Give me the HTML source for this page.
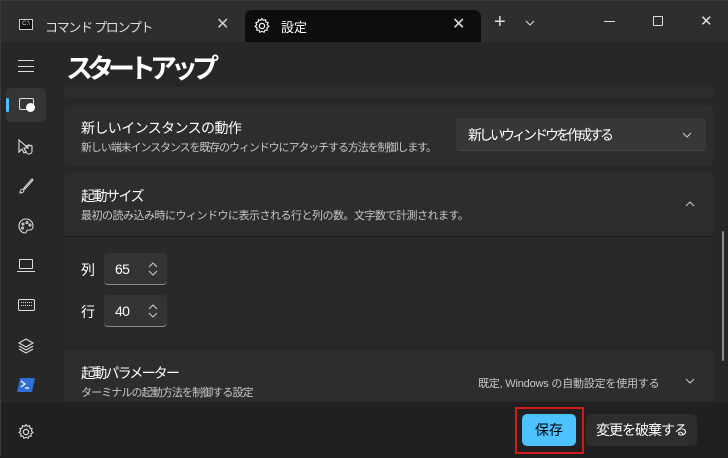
<!DOCTYPE html>
<html><head><meta charset="utf-8"><style>
*{margin:0;padding:0;box-sizing:border-box}
body{width:728px;height:457px;background:#202020;font-family:"Liberation Sans","Noto Sans CJK JP",sans-serif;color:#fff;position:relative;overflow:hidden;border:1px solid #3a3a3a}
.abs{position:absolute;white-space:nowrap}
.t1{font-size:14px;color:#fff;letter-spacing:-0.6px}
.t2{font-size:11px;color:#c8c8c8;letter-spacing:-0.9px}
.card{position:absolute;left:63px;width:649px;background:#2d2d2d;border-radius:5px}
svg{position:absolute}
</style></head><body>
<div class="abs" style="left:0;top:0;width:728px;height:41px;background:#2e2e2e"></div>
<div class="abs" style="left:18px;top:18px;width:14px;height:11px;border:1px solid #ccc;background:#111;font-size:6px;line-height:9px;color:#ddd;text-align:center">C:\</div>
<div class="abs" style="left:44px;top:16px;font-size:13px;color:#ddd;letter-spacing:-1.3px">コマンド プロンプト</div>
<div class="abs" style="left:215px;top:13px;font-size:16px;color:#ccc">✕</div>
<div class="abs" style="left:244px;top:9px;width:236px;height:33px;background:#0d0d0d;border-radius:7px 7px 0 0"></div>
<svg style="left:252px;top:16px" width="18" height="18" viewBox="0 0 18 18"><circle cx="9" cy="9" r="2.6" fill="none" stroke="#fff" stroke-width="1.2"/><path d="M9 1.5l1.3 1.9 2.2-.7.4 2.3 2.2.6-.8 2.2 1.6 1.7-2 1.3.4 2.3-2.3.1-.9 2.1-2.1-1-2.1 1-.9-2.1-2.3-.1.4-2.3-2-1.3 1.6-1.7-.8-2.2 2.2-.6.4-2.3 2.2.7z" fill="none" stroke="#fff" stroke-width="1.1"/></svg>
<div class="abs" style="left:280px;top:16px;font-size:13px">設定</div>
<div class="abs" style="left:451px;top:13px;font-size:16px;color:#ddd">✕</div>
<div class="abs" style="left:493px;top:10px;font-size:20px;color:#ddd;font-weight:300">+</div>
<svg style="left:524px;top:19px" width="10" height="6" viewBox="0 0 10 6" fill="none" stroke="#ddd"><path d="M1 1l4 4 4-4"/></svg>
<div class="abs" style="left:603px;top:20px;width:11px;height:1px;background:#ddd"></div>
<div class="abs" style="left:652px;top:15px;width:10px;height:10px;border:1px solid #ddd;border-radius:1px"></div>
<div class="abs" style="left:699px;top:11px;font-size:15px;color:#ddd">✕</div>
<div class="abs" style="left:0;top:41px;width:728px;height:359px;background:#272727"></div>
<div class="abs" style="left:17px;top:59px;width:16px;height:12px;border-top:1px solid #ddd;border-bottom:1px solid #ddd"></div>
<div class="abs" style="left:17px;top:65px;width:16px;height:1px;background:#ddd"></div>
<div class="abs" style="left:65px;top:46px;font-size:27px;font-weight:bold;letter-spacing:-6px">スタートアップ</div>
<div class="abs" style="left:5px;top:87px;width:40px;height:34px;background:#353535;border-radius:5px"></div>
<div class="abs" style="left:5px;top:97px;width:3px;height:14px;background:#4cc2ff;border-radius:2px"></div>
<div class="abs" style="left:18px;top:97px;width:15px;height:12px;border:1.2px solid #ddd;border-radius:2px"></div>
<div class="abs" style="left:25px;top:102px;width:9px;height:9px;border-radius:50%;background:#fff"></div>
<svg style="left:16px;top:137px" width="18" height="18" viewBox="0 0 18 18" fill="none" stroke="#ddd" stroke-width="1.1"><path d="M2 2v12l3-3 2 4 2-1-2-4h4z"/><path d="M9 9c0-2 2-2 2 0v-1c0-1.5 2-1.5 2 0v.5c0-1.5 2-1.5 2 0V13c0 2-1.5 3-3 3s-3-1-3-3"/></svg>
<svg style="left:16px;top:176px" width="18" height="18" viewBox="0 0 18 18" fill="none" stroke="#ddd" stroke-width="1.1"><path d="M15 2l-8 9 1 1 8-9zM6 12c-2 0-3 2-3 4 2 0 4-1 4-3z"/></svg>
<svg style="left:16px;top:216px" width="18" height="18" viewBox="0 0 18 18" fill="none" stroke="#ddd" stroke-width="1.1"><path d="M9 2C5 2 2 5 2 9s3 7 6 7c2 0 1-3 3-3h2c2 0 3-2 3-4 0-4-3-7-7-7z"/><circle cx="6" cy="7" r="1"/><circle cx="10" cy="5.5" r="1"/><circle cx="13" cy="8" r="1"/><circle cx="5.5" cy="11" r="1"/></svg>
<div class="abs" style="left:18px;top:258px;width:14px;height:10px;border:1.2px solid #ddd;border-radius:1px"></div>
<div class="abs" style="left:16px;top:270px;width:18px;height:1.2px;background:#ddd"></div>
<div class="abs" style="left:17px;top:298px;width:17px;height:12px;border:1.2px solid #ddd;border-radius:2px"></div>
<div class="abs" style="left:20px;top:301px;width:11px;height:4px;border-top:1px dotted #ddd;border-bottom:1px dotted #ddd"></div>
<svg style="left:16px;top:336px" width="18" height="18" viewBox="0 0 18 18" fill="none" stroke="#ddd" stroke-width="1.1"><path d="M9 2l7 4-7 4-7-4z"/><path d="M2 9l7 4 7-4M2 12l7 4 7-4"/></svg>
<svg style="left:16px;top:377px" width="18" height="14" viewBox="0 0 18 14"><path d="M3 0h15l-3 14H0z" fill="#2f6fd6"/><path d="M4 3l4 3-4 3M8 10h4" stroke="#fff" stroke-width="1.2" fill="none"/></svg>
<div class="card" style="top:86px;height:11px;border-radius:0 0 5px 5px"></div>
<div class="card" style="top:104px;height:61px"></div>
<div class="abs t1" style="left:80px;top:117px">新しいインスタンスの動作</div>
<div class="abs t2" style="left:80px;top:138px;letter-spacing:-1.1px">新しい端末インスタンスを既存のウィンドウにアタッチする方法を制御します。</div>
<div class="abs" style="left:455px;top:117px;width:250px;height:33px;background:#373737;border-radius:4px;border-bottom:1px solid #444"></div>
<div class="abs" style="left:467px;top:124px;font-size:14px;letter-spacing:-3px">新しいウィンドウを作成する</div>
<svg style="left:681px;top:131px" width="10" height="6" viewBox="0 0 10 6" fill="none" stroke="#ccc"><path d="M1 1l4 4 4-4"/></svg>
<div class="card" style="top:171px;height:174px;background:#292929"></div>
<div class="abs" style="left:63px;top:171px;width:649px;height:65px;background:#2d2d2d;border-radius:5px 5px 0 0;border-bottom:1px solid #1c1c1c"></div>
<div class="abs t1" style="left:80px;top:185px;letter-spacing:-1.5px">起動サイズ</div>
<div class="abs t2" style="left:80px;top:206px;letter-spacing:-0.5px">最初の読み込み時にウィンドウに表示される行と列の数。文字数で計測されます。</div>
<svg style="left:684px;top:200px" width="10" height="6" viewBox="0 0 10 6" fill="none" stroke="#ccc"><path d="M1 5l4-4 4 4"/></svg>
<div class="abs t1" style="left:80px;top:259px">列</div>
<div class="abs" style="left:103px;top:252px;width:63px;height:32px;background:#343434;border-radius:4px;border-bottom:1px solid #8a8a8a"></div>
<div class="abs t1" style="left:114px;top:260px">65</div>
<div class="abs t1" style="left:80px;top:301px">行</div>
<div class="abs" style="left:103px;top:294px;width:63px;height:32px;background:#343434;border-radius:4px;border-bottom:1px solid #8a8a8a"></div>
<div class="abs t1" style="left:114px;top:302px">40</div>
<svg style="left:146px;top:260px" width="12" height="16" viewBox="0 0 12 16" fill="none" stroke="#ccc"><path d="M2 6l4-4 4 4M2 10l4 4 4-4"/></svg>
<svg style="left:146px;top:302px" width="12" height="16" viewBox="0 0 12 16" fill="none" stroke="#ccc"><path d="M2 6l4-4 4 4M2 10l4 4 4-4"/></svg>
<div class="card" style="top:349px;height:51px;border-radius:5px 5px 0 0"></div>
<div class="abs t1" style="left:80px;top:362px;letter-spacing:-1.8px">起動パラメーター</div>
<div class="abs t2" style="left:80px;top:383px;height:15px;overflow:hidden">ターミナルの起動方法を制御する設定</div>
<div class="abs t2" style="left:477px;top:374px;letter-spacing:-0.2px">既定, Windows の自動設定を使用する</div>
<svg style="left:684px;top:377px" width="10" height="6" viewBox="0 0 10 6" fill="none" stroke="#ccc"><path d="M1 1l4 4 4-4"/></svg>
<div class="abs" style="left:721px;top:230px;width:2px;height:130px;background:#8a8a8a;border-radius:1px"></div>
<div class="abs" style="left:0;top:400px;width:728px;height:57px;background:#202020;border-top:1px solid #2c2c2c"></div>
<svg style="left:16px;top:422px" width="18" height="18" viewBox="0 0 18 18"><circle cx="9" cy="9" r="2.6" fill="none" stroke="#ddd" stroke-width="1.2"/><path d="M9 1.5l1.3 1.9 2.2-.7.4 2.3 2.2.6-.8 2.2 1.6 1.7-2 1.3.4 2.3-2.3.1-.9 2.1-2.1-1-2.1 1-.9-2.1-2.3-.1.4-2.3-2-1.3 1.6-1.7-.8-2.2 2.2-.6.4-2.3 2.2.7z" fill="none" stroke="#ddd" stroke-width="1.1"/></svg>
<div class="abs" style="left:514px;top:406px;width:69px;height:47px;border:2px solid #d11a1a"></div>
<div class="abs" style="left:521px;top:413px;width:54px;height:32px;background:#4cc2ff;border-radius:5px;color:#000;font-size:14px;text-align:center;line-height:32px">保存</div>
<div class="abs" style="left:585px;top:413px;width:111px;height:32px;background:#2d2d2d;border-radius:5px;font-size:14px;text-align:center;line-height:32px;letter-spacing:-1px">変更を破棄する</div>
</body></html>
